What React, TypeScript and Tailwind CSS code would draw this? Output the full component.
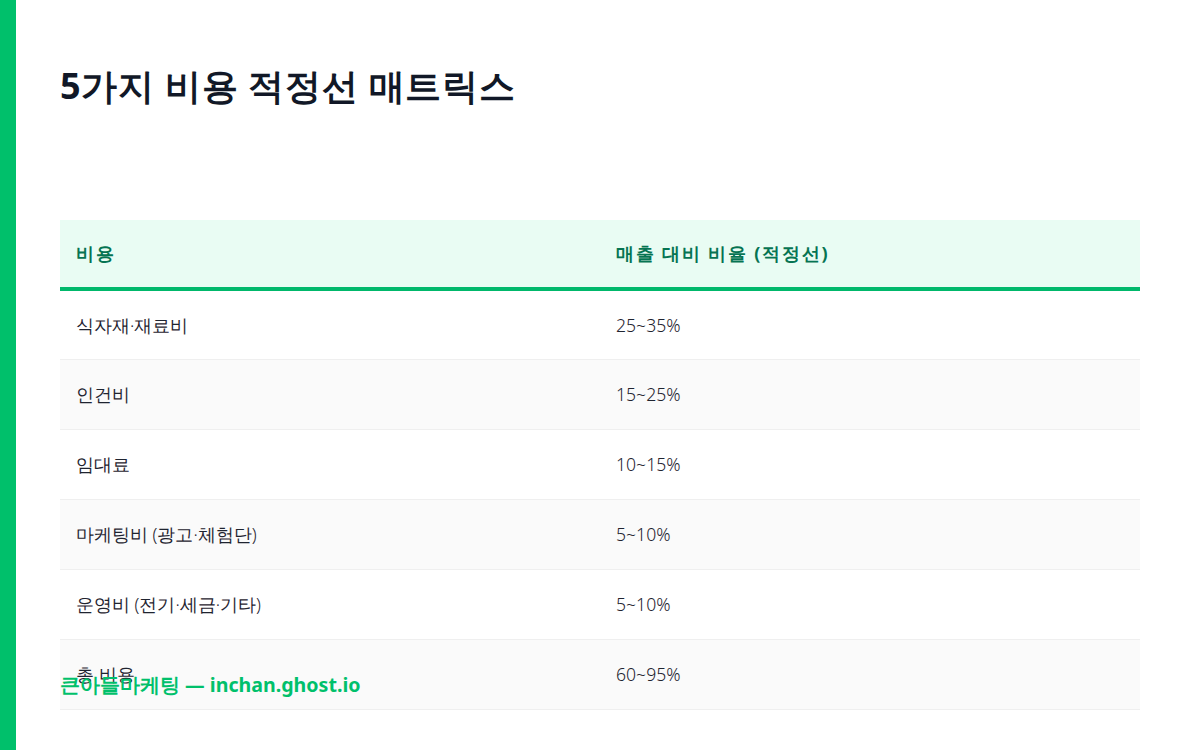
const rows = [
  { name: "식자재·재료비", ratio: "25~35%" },
  { name: "인건비", ratio: "15~25%" },
  { name: "임대료", ratio: "10~15%" },
  { name: "마케팅비 (광고·체험단)", ratio: "5~10%" },
  { name: "운영비 (전기·세금·기타)", ratio: "5~10%" },
  { name: "총 비용", ratio: "60~95%" },
];

export default function App() {
  return (
    <div className="relative flex h-[750px] w-[1200px] overflow-hidden bg-white font-sans">
      {/* 왼쪽 초록 바 */}
      <div className="w-4 shrink-0 bg-[#00c06b]" />

      <div className="flex-1 pl-[44px] pr-[60px] pt-[60px]">
        <h1 className="text-[36px] font-bold leading-[52px] tracking-[0.02em] text-[#111827]">
          5가지 비용 적정선 매트릭스
        </h1>

        <table className="mt-[108px] w-full border-collapse">
          <thead>
            <tr className="h-[69px] border-b-4 border-[#00b86b] bg-[#e9fcf3]">
              <th className="w-1/2 px-4 text-left text-[18px] font-bold tracking-[0.1em] text-[#067452]">비용</th>
              <th className="w-1/2 px-4 text-left text-[18px] font-bold tracking-[0.1em] text-[#067452]">
                매출 대비 비율 (적정선)
              </th>
            </tr>
          </thead>
          <tbody>
            {rows.map((row, i) => (
              <tr
                key={i}
                className={
                  i % 2 === 1
                    ? "h-[70px] border-b border-[#efefef] bg-[#fafafa]"
                    : "h-[70px] border-b border-[#efefef] bg-white"
                }
              >
                <td className="px-4 text-[17.6px] font-light text-[#1f2430]">{row.name}</td>
                <td className="px-4 text-[17.6px] font-light text-[#1f2430]">{row.ratio}</td>
              </tr>
            ))}
          </tbody>
        </table>
      </div>

      {/* 하단 서명 */}
      <div className="absolute left-[60px] top-[670px] text-[19.6px] font-bold leading-[30px] text-[#00c06b]">
        큰아들마케팅 — inchan.ghost.io
      </div>
    </div>
  );
}
